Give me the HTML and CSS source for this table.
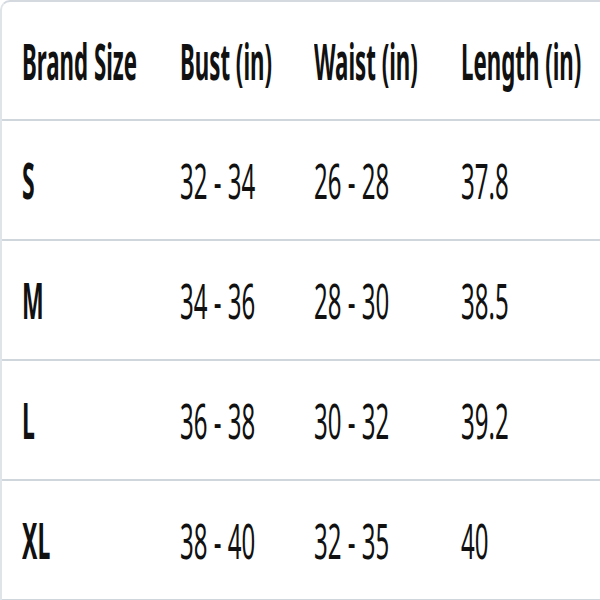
FILE: index.html
```html
<!DOCTYPE html>
<html>
<head>
<meta charset="utf-8">
<link rel="stylesheet" href="styles.css">
</head>
<body>
<div class="chart">
  <div class="row head">
    <div class="cell"><span class="txt">Brand Size</span></div>
    <div class="cell"><span class="txt">Bust (in)</span></div>
    <div class="cell"><span class="txt">Waist (in)</span></div>
    <div class="cell"><span class="txt">Length (in)</span></div>
  </div>
  <div class="row">
    <div class="cell size"><span class="txt">S</span></div>
    <div class="cell"><span class="txt">32 - 34</span></div>
    <div class="cell"><span class="txt">26 - 28</span></div>
    <div class="cell"><span class="txt">37.8</span></div>
  </div>
  <div class="row">
    <div class="cell size"><span class="txt">M</span></div>
    <div class="cell"><span class="txt">34 - 36</span></div>
    <div class="cell"><span class="txt">28 - 30</span></div>
    <div class="cell"><span class="txt">38.5</span></div>
  </div>
  <div class="row">
    <div class="cell size"><span class="txt">L</span></div>
    <div class="cell"><span class="txt">36 - 38</span></div>
    <div class="cell"><span class="txt">30 - 32</span></div>
    <div class="cell"><span class="txt">39.2</span></div>
  </div>
  <div class="row">
    <div class="cell size"><span class="txt">XL</span></div>
    <div class="cell"><span class="txt">38 - 40</span></div>
    <div class="cell"><span class="txt">32 - 35</span></div>
    <div class="cell"><span class="txt">40</span></div>
  </div>
</div>
</body>
</html>
```
FILE: styles.css
```css
html, body {
  margin: 0;
  padding: 0;
  background: #ffffff;
}
.chart {
  width: 600px;
  height: 600px;
  box-sizing: border-box;
  border-top: 2px solid #d3d9de;
  border-left: 2px solid #dfe4e8;
  border-top-left-radius: 10px;
  overflow: hidden;
  font-family: "Noto Sans", "DejaVu Sans", sans-serif;
  color: #111111;
}
.row {
  display: grid;
  grid-template-columns: 158px 134px 147px 1fr;
  height: 120px;
  box-sizing: border-box;
  border-bottom: 2px solid #cfd6dc;
  padding-left: 20px;
  align-items: center;
}
.row.head {
  height: 119px;
}
.cell {
  font-size: 50px;
  line-height: 1;
  font-weight: 400;
  white-space: nowrap;
}
.txt {
  display: inline-block;
  transform: scaleX(0.48);
  transform-origin: left center;
}
.head .cell,
.cell.size {
  font-weight: 700;
}
.head .txt {
  transform: scaleX(0.445);
}
.size .txt {
  transform: scaleX(0.46);
}
```
